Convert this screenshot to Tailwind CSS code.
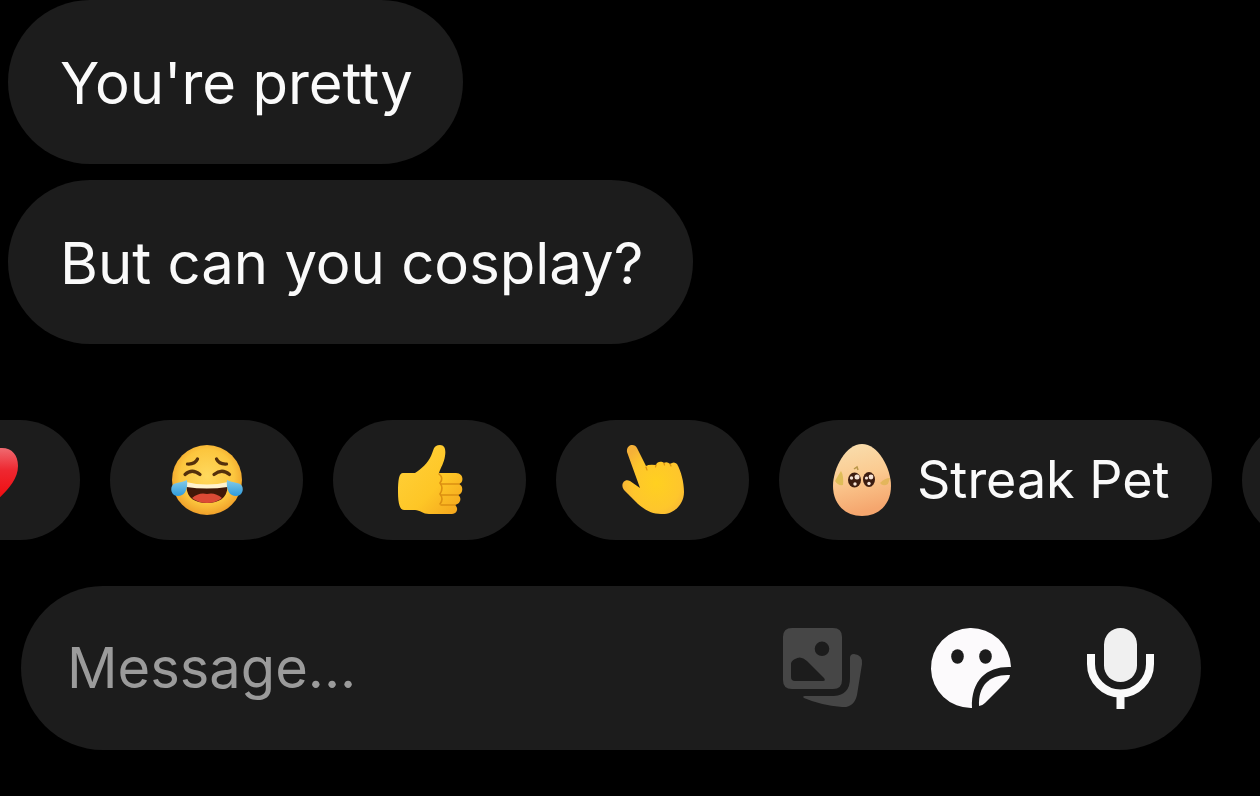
<!DOCTYPE html>
<html lang="en">
<head>
<meta charset="utf-8">
<meta name="viewport" content="width=device-width, initial-scale=1">
<title>Chat</title>
<script src="https://cdn.jsdelivr.net/npm/@tailwindcss/browser@4"></script>
</head>
<body class="min-h-screen overflow-x-hidden bg-black font-[Inter,sans-serif] text-white">
<main class="flex min-h-screen flex-col">

  <!-- Received messages -->
  <section aria-label="Messages" class="flex flex-col items-start gap-4 px-2 text-[58px] leading-[72px]">
    <p class="rounded-full bg-[#1c1c1c] pt-[47px] pr-[50px] pb-[45px] pl-[52px] text-neutral-50">You're pretty</p>
    <p class="rounded-full bg-[#1c1c1c] pt-[47px] pr-[50px] pb-[45px] pl-[52px] text-neutral-50">But can you cosplay?</p>
  </section>

  <!-- Quick replies -->
  <section aria-label="Quick replies" class="mt-[76px] overflow-hidden">
    <div class="-ml-[113px] flex gap-[30px]">
      <button type="button" aria-label="Heart" class="flex h-[120px] w-[193px] shrink-0 items-center justify-center rounded-full bg-[#1c1c1c]">
        <svg class="size-[72px]" viewBox="0 0 72 72" aria-hidden="true">
          <defs><linearGradient id="heart" x1="0" y1="0" x2="0" y2="1"><stop offset="0" stop-color="#ef6a70"/><stop offset=".35" stop-color="#ee2730"/><stop offset="1" stop-color="#f00000"/></linearGradient></defs>
          <path d="M36 68C24 56 2 41 2 22C2 11 8 4 17 4C26 4 33 8 36 16C39 8 46 4 54 4C64 4 70 11 70 22C70 41 48 56 36 68Z" fill="url(#heart)"/>
        </svg>
      </button>
      <button type="button" aria-label="Tears of joy" class="flex h-[120px] w-[193px] shrink-0 items-center justify-center rounded-full bg-[#1c1c1c]">
        <svg class="size-[72px]" viewBox="0 0 72 72" aria-hidden="true">
          <defs>
            <radialGradient id="face" cx=".5" cy=".45" r=".55"><stop offset="0" stop-color="#ffd95e"/><stop offset=".7" stop-color="#fcc63e"/><stop offset="1" stop-color="#f0a02a"/></radialGradient>
            <linearGradient id="tear" x1="0" y1="0" x2="0" y2="1"><stop offset="0" stop-color="#86cbe8"/><stop offset="1" stop-color="#2e9bdc"/></linearGradient>
          </defs>
          <circle cx="36" cy="36" r="35" fill="url(#face)"/>
          <g fill="none" stroke="#54300c" stroke-width="3.2" stroke-linecap="round">
            <path d="M16.500 20Q24 20.500 26.500 15"/><path d="M45.500 15Q48 20.500 55.500 20"/>
            <path d="M14 30.500Q21 24 29 30.500"/><path d="M43 30.500Q51 24 58.500 30.500"/>
          </g>
          <path d="M15 38Q36 43 57 38L56 45H16Z" fill="#fff3cf"/>
          <path d="M15.500 43Q36 46 56.500 43C56 54 48 59 36 59C24 59 16 54 15.500 43Z" fill="#401808"/>
          <path d="M21 54Q28 48 36 50Q44 48 51 54Q45 59 36 59Q27 59 21 54Z" fill="#dc4a35"/>
          <path d="M16 36C17 45 14 52 7 52C1 52 -1 46 1 42C3 38 10 39 16 36Z" fill="url(#tear)"/>
          <path d="M56 36C55 45 58 52 65 52C71 52 73 46 71 42C69 38 62 39 56 36Z" fill="url(#tear)"/>
        </svg>
      </button>
      <button type="button" aria-label="Thumbs up" class="flex h-[120px] w-[193px] shrink-0 items-center justify-center rounded-full bg-[#1c1c1c]">
        <svg class="size-[72px]" viewBox="0 0 72 72" aria-hidden="true">
          <defs><linearGradient id="hand" x1="0" y1="0" x2="1" y2="1"><stop offset="0" stop-color="#ffd23c"/><stop offset=".6" stop-color="#fec626"/><stop offset="1" stop-color="#f3a21c"/></linearGradient></defs>
          <path d="M46 1C51 1 52 6 51 12C50 19 47 23 45 29H62C70 29 70 39 65 40C70 42 69 50 64 51C68 53 67 60 61 61C65 64 63 70 58 70H35C29 70 26 66 21 66H10C6 66 4 60 4 48C4 36 5 29 9 29H21C27 25 34 19 37 12C40 6 39 1 46 1Z" fill="url(#hand)"/>
          <g fill="none" stroke="#dc9012" stroke-width="1.6" stroke-linecap="round"><path d="M47 40H65"/><path d="M47 51H64"/><path d="M47 61H61"/><path d="M45 30Q50 34 46 39Q50 44 46 50Q50 55 46 60"/></g>
        </svg>
      </button>
      <button type="button" aria-label="Pointing up" class="flex h-[120px] w-[193px] shrink-0 items-center justify-center rounded-full bg-[#1c1c1c]">
        <svg class="size-[72px]" viewBox="0 0 72 72" aria-hidden="true">
          <defs><radialGradient id="point" cx=".55" cy=".55" r=".6"><stop offset="0" stop-color="#ffd020"/><stop offset=".65" stop-color="#fec62c"/><stop offset="1" stop-color="#f5b138"/></radialGradient></defs>
          <path d="M10 8C9 0 18 -1 20 4L29 22Q32 20 39 21C40 17 45 17 47 19Q50 17 53 20Q57 17 60 20C64 27 67 38 67 48C67 61 56 71 44 70C33 70 26 64 21 60L7 46C3 41 7 34 13 37L23 44Z" fill="url(#point)"/>
          <g fill="none" stroke="#dc920f" stroke-width="1.200" stroke-linecap="round"><path d="M29 23L30 26"/><path d="M39 21L38.500 23"/><path d="M47 19L47.500 21"/><path d="M53 20L54 22"/></g>
        </svg>
      </button>
      <button type="button" class="flex h-[120px] shrink-0 items-center gap-[26px] rounded-full bg-[#1c1c1c] pr-[42px] pl-[54px] text-[52px] leading-[60px] text-neutral-50">
        <svg class="h-[72px] w-[58px]" viewBox="0 0 58 72" aria-hidden="true">
          <defs><linearGradient id="egg" x1="0" y1="0" x2=".2" y2="1"><stop offset="0" stop-color="#f8dfb0"/><stop offset=".5" stop-color="#fbcb91"/><stop offset="1" stop-color="#f5a66e"/></linearGradient></defs>
          <path d="M29 0C45 0 58 24 58 42C58 60 46 72 29 72C12 72 0 60 0 42C0 24 13 0 29 0Z" fill="url(#egg)"/>
          <path d="M2 37Q6 30 8 27Q11 32 10 41Q5 42 2 37Z" fill="#dfbd58"/>
          <path d="M57 34Q52 34 47 39Q50 43 55 40Z" fill="#e4b65c"/>
          <path d="M21 25L24 23L25 26" fill="none" stroke="#b89648" stroke-width="1.500"/>
          <ellipse cx="21.500" cy="36" rx="6.500" ry="7.500" fill="#3c1c10"/><ellipse cx="36" cy="35.500" rx="6" ry="7.500" fill="#3c1c10"/>
          <g fill="#f6e4d8"><circle cx="24" cy="33" r="2.500"/><circle cx="18.500" cy="34" r="1.700"/><circle cx="22" cy="40" r="1.700"/><circle cx="38" cy="33" r="2.400"/><circle cx="33.500" cy="34" r="1.600"/><circle cx="36" cy="39.500" r="1.700"/></g>
        </svg>
        <span>Streak Pet</span>
      </button>
      <button type="button" aria-label="More replies" class="h-[120px] w-[193px] shrink-0 rounded-full bg-[#1c1c1c]"></button>
    </div>
  </section>

  <!-- Composer -->
  <form class="mt-[46px] mr-[59px] mb-[46px] ml-[21px] flex h-[164px] items-center gap-[69px] rounded-full bg-[#1c1c1c] pr-[41px] pl-[46px]">
    <input type="text" aria-label="Message" placeholder="Message..." class="min-w-0 flex-1 bg-transparent text-[56px] leading-[72px] outline-none placeholder:text-[#9b9b9b]">
    <button type="button" aria-label="Gallery" class="shrink-0 text-[#464646]">
      <svg class="size-20 overflow-visible" viewBox="0 0 80 80" fill="currentColor" aria-hidden="true">
        <path fill-rule="evenodd" d="M10 0H51Q60 0 60 9V52Q60 61 51 61H10Q1 61 1 52V9Q1 0 10 0ZM40 13.500A7.300 7.300 0 1 0 40 28.100A7.300 7.300 0 1 0 40 13.500ZM9 36V49Q9 53 13 53H41Q44 53 42 50L25 33Q19 27 13 31Q9 33 9 36Z"/>
        <path d="M68 30Q68 26 72 26Q81 27 80 36L75 67Q72 80 60 79Q38 77 22 70Q20 68 23 68H52Q68 67 68 50Z"/>
      </svg>
    </button>
    <button type="button" aria-label="Stickers" class="shrink-0 text-[#fcfafc]">
      <svg class="size-20 overflow-visible" viewBox="0 0 80 80" fill="currentColor" aria-hidden="true">
        <path d="M41 80A40 40 0 1 1 80 39C57 38 40 51 41 80Z"/>
        <path d="M48 78C47 57 59 46 79 47Q79 50 76 53L54 75Q51 78 48 78Z"/>
        <g fill="#1c1c1c"><ellipse cx="26.500" cy="28.500" rx="6.300" ry="7.300"/><ellipse cx="54.500" cy="28.500" rx="6.300" ry="7.300"/></g>
      </svg>
    </button>
    <button type="button" aria-label="Voice message" class="shrink-0 text-neutral-50">
      <svg class="size-20 overflow-visible" viewBox="0 0 80 80" aria-hidden="true">
        <rect x="24" y="0" width="33" height="54" rx="16.500" fill="#f0f0f0"/>
        <path d="M11 26V36A29.500 29.500 0 0 0 70 36V26M40.500 66V81" fill="none" stroke="currentColor" stroke-width="8"/>
      </svg>
    </button>
  </form>
</main>
</body>
</html>
